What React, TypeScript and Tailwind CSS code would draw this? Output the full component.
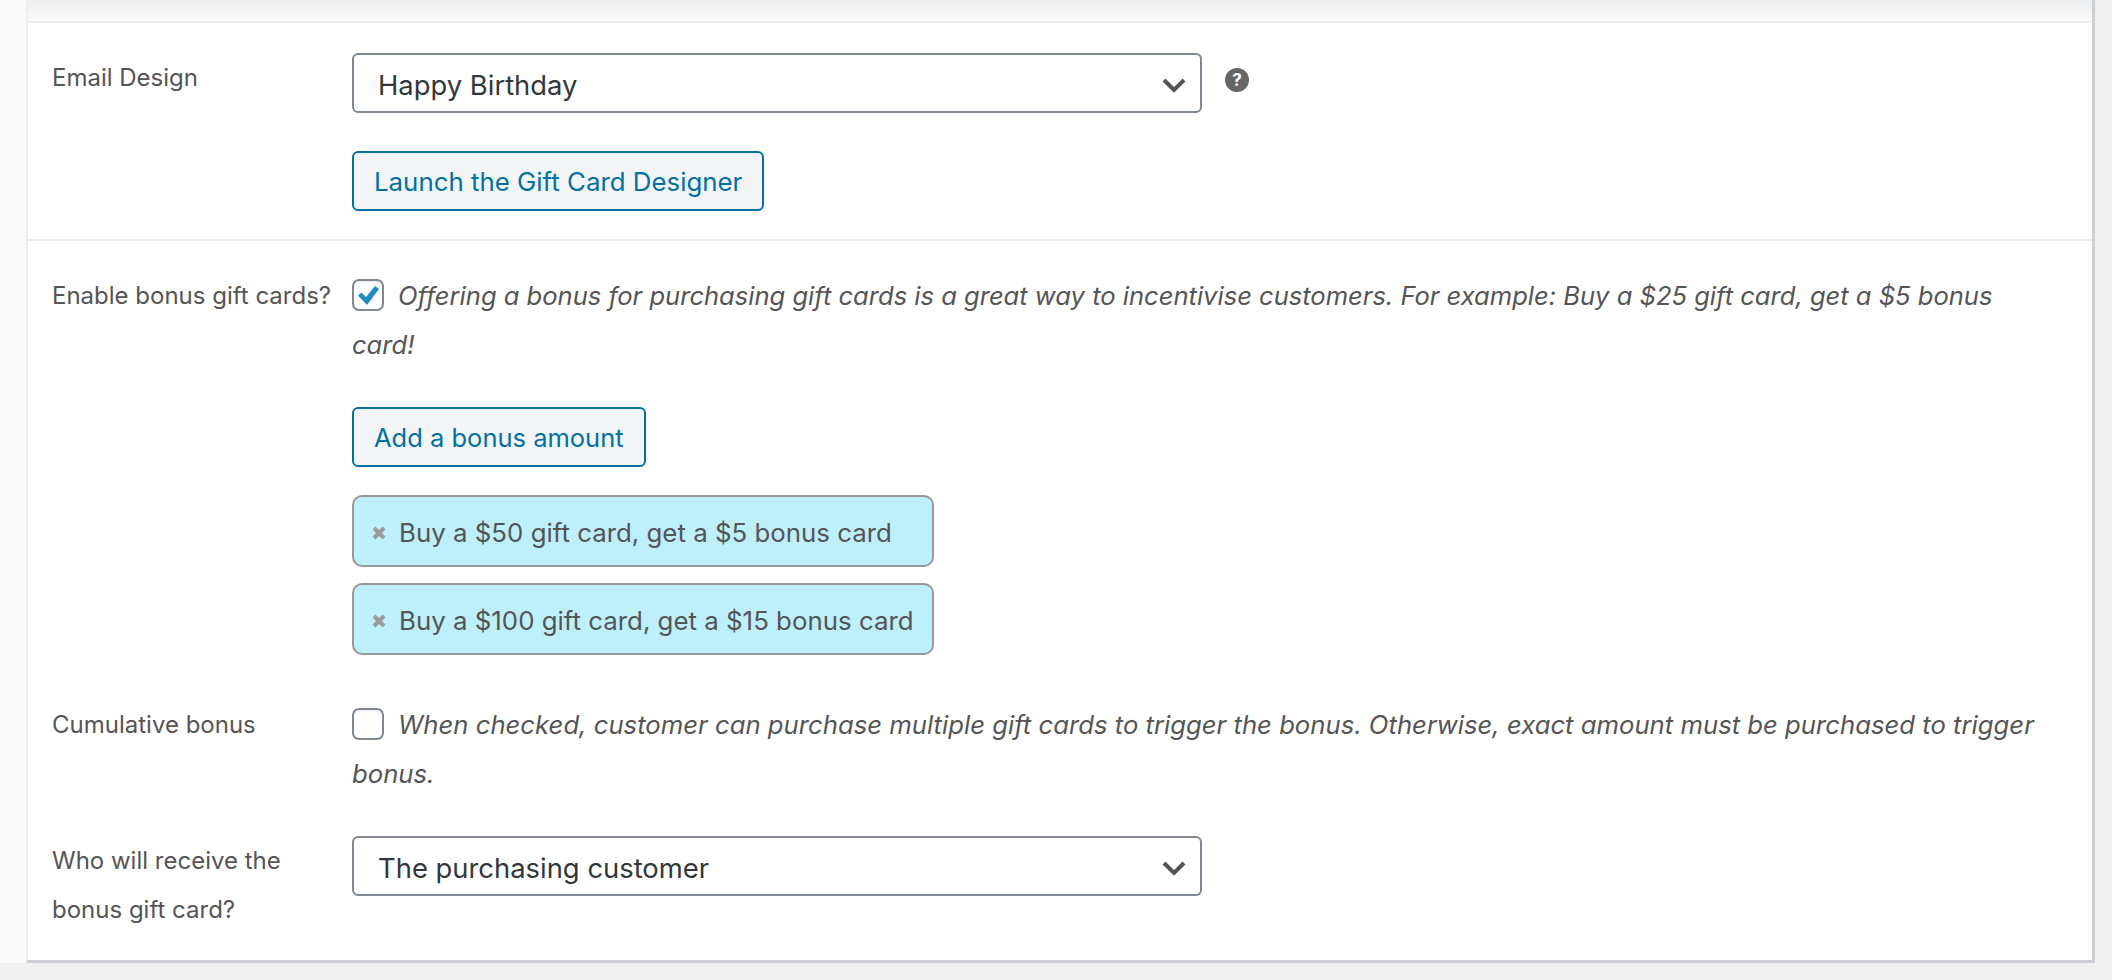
const font = "[font-family:Inter,'Liberation_Sans',sans-serif]"

function FieldLabel({ children }: { children: React.ReactNode }) {
  return <label className="w-[300px] shrink-0 text-[24px] leading-[49px] text-[#555]">{children}</label>
}

function SelectBox({ value }: { value: string }) {
  return (
    <div className="relative w-[850px]">
      <select
        defaultValue={value}
        className="block h-[60px] w-full appearance-none rounded-[6px] border-2 border-[#7e8993] bg-white pl-[24px] pr-[60px] pt-[5px] text-[27.4px] text-[#32373c] outline-none"
      >
        <option>{value}</option>
      </select>
      <svg className="pointer-events-none absolute left-[810px] top-[24px] h-[16px] w-[24px]" viewBox="0 0 24 16" fill="none">
        <path d="M2 3l10 10L22 3" stroke="#555" strokeWidth="4" />
      </svg>
    </div>
  )
}

function Checkbox({ checked }: { checked?: boolean }) {
  return (
    <span className="relative top-[6px] mr-[14px] inline-block h-[32px] w-[32px] rounded-[7px] border-2 border-[#7e8993] bg-white align-baseline shadow-[inset_0_1px_2px_rgba(0,0,0,0.1)]">
      {checked && (
        <svg className="absolute left-[4px] top-[5px] h-[19px] w-[21px]" viewBox="0 0 21 19">
          <path d="M0 9.5L3.5 6.5 8 11 17 0l4 3L9 19z" fill="#1e8cbe" />
        </svg>
      )}
    </span>
  )
}

function Chip({ text }: { text: string }) {
  return (
    <div className="flex h-[72px] w-[582px] items-center rounded-[10px] border-2 border-[#999] bg-[#bdf0fb] pl-[18px] pt-[4px] text-[25.85px] text-[#555]">
      <svg className="mr-[13px] h-[14px] w-[14px] shrink-0" viewBox="0 0 14 14">
        <path d="M2 2l10 10M12 2L2 12" stroke="#999" strokeWidth="4" />
      </svg>
      <span className="whitespace-nowrap">{text}</span>
    </div>
  )
}

export default function App() {
  return (
    <div className={`flex h-[980px] w-[2112px] flex-col overflow-hidden bg-[#f0f0f1] ${font}`}>
      <div className="flex h-[963px] shrink-0">
        <div className="w-[26px] shrink-0 bg-[#f9f9f9]" />
        <div className="flex w-[2069px] flex-col border-l-2 border-r-[3px] border-b-[3px] border-l-[#eeeeee] border-r-[#ccd0d4] border-b-[#ccd0d4] bg-white">
          <div className="h-[23px] shrink-0 border-b-2 border-[#eeeeee] bg-gradient-to-b from-[#edeeef] to-[#fafafa]" />

          <div className="flex border-b-2 border-[#eeeeee] pb-[28px] pl-[24px] pt-[30px]">
            <FieldLabel>Email Design</FieldLabel>
            <div>
              <div className="flex items-start">
                <SelectBox value="Happy Birthday" />
                <svg className="ml-[23px] mt-[15px] h-[24px] w-[24px]" viewBox="0 0 24 24">
                  <circle cx="12" cy="12" r="12" fill="#666" />
                  <text x="12" y="18" textAnchor="middle" fontSize="17" fontWeight="700" fill="#fff">?</text>
                </svg>
              </div>
              <button className="mt-[38px] block h-[60px] rounded-[6px] border-2 border-[#0071a1] bg-[#f3f5f6] px-[20px] pt-[2px] text-[25.85px] text-[#0071a1]">
                Launch the Gift Card Designer
              </button>
            </div>
          </div>

          <div className="flex pl-[24px] pt-[30px]">
            <FieldLabel>Enable bonus gift cards?</FieldLabel>
            <div className="w-[1690px]">
              <p className="text-[25.55px] italic leading-[49px] text-[#555]">
                <Checkbox checked />
                Offering a bonus for purchasing gift cards is a great way to incentivise customers. For example: Buy a $25 gift card, get a $5 bonus card!
              </p>
              <button className="mt-[38px] block h-[60px] rounded-[6px] border-2 border-[#0071a1] bg-[#f3f5f6] px-[20px] pt-[2px] text-[25.5px] text-[#0071a1]">
                Add a bonus amount
              </button>
              <div className="mt-[28px] flex flex-col gap-[16px]">
                <Chip text="Buy a $50 gift card, get a $5 bonus card" />
                <Chip text="Buy a $100 gift card, get a $15 bonus card" />
              </div>
            </div>
          </div>

          <div className="flex pl-[24px] pt-[45px]">
            <FieldLabel>Cumulative bonus</FieldLabel>
            <p className="w-[1690px] text-[25.7px] italic leading-[49px] text-[#555]">
              <Checkbox />
              When checked, customer can purchase multiple gift cards to trigger the bonus. Otherwise, exact amount must be purchased to trigger bonus.
            </p>
          </div>

          <div className="flex pl-[24px] pt-[38px]">
            <FieldLabel>
              Who will receive the
              <br />
              bonus gift card?
            </FieldLabel>
            <SelectBox value="The purchasing customer" />
          </div>
        </div>
      </div>
    </div>
  )
}
